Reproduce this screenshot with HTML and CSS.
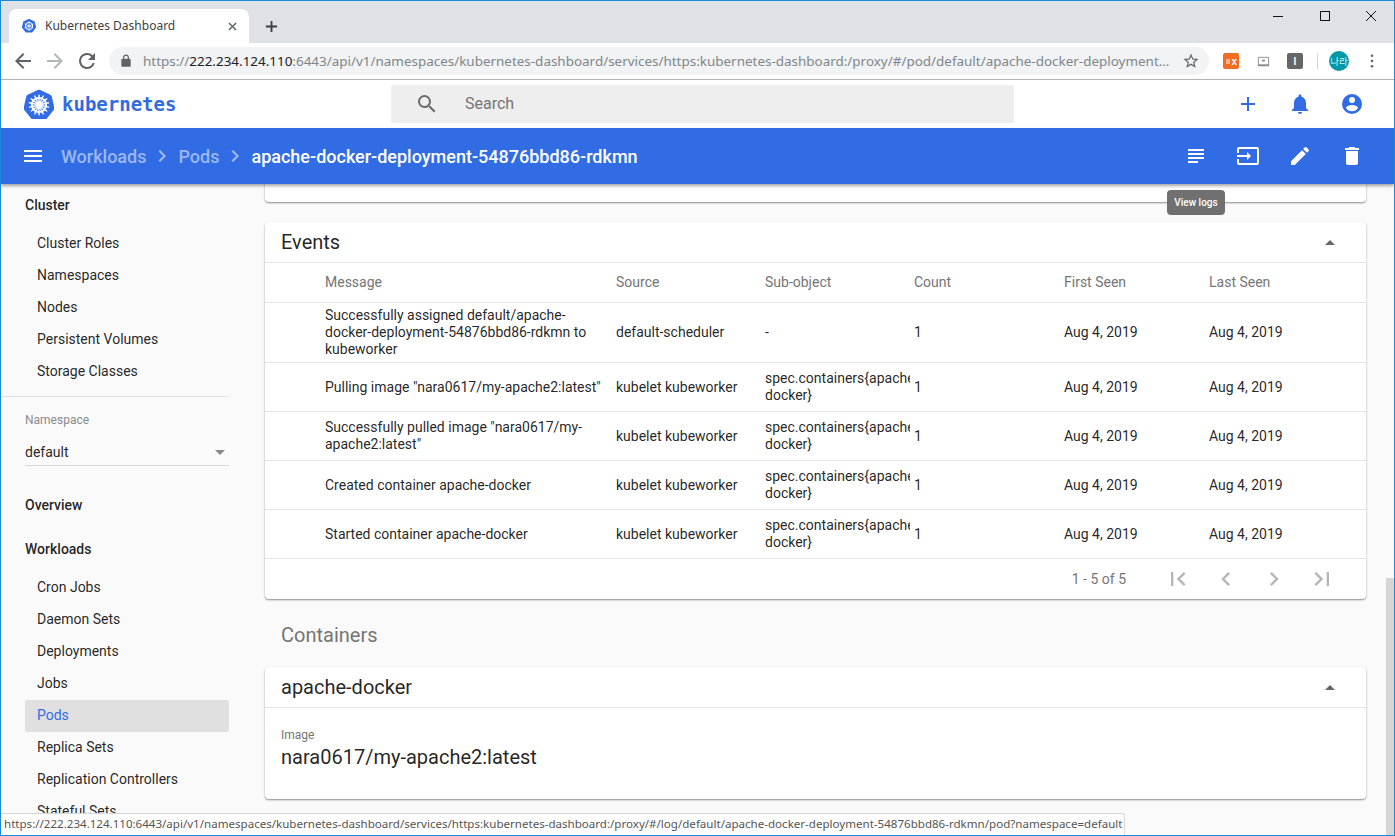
FILE: index.html
```html
<!DOCTYPE html>
<html lang="en">
<head>
<meta charset="utf-8">
<title>Kubernetes Dashboard</title>
<link rel="stylesheet" href="styles.css">
</head>
<body>
<div class="window">
  <div class="tabstrip">
    <div class="tab">
      <svg class="favicon" viewBox="0 0 24 24"><path fill="#326ce5" d="M12 1l8.6 4.100 2.100 9.300-5.900 7.500H7.200L1.300 14.400l2.100-9.300z"/><circle cx="12" cy="12" r="5.500" fill="none" stroke="#fff" stroke-width="1.400"/><path stroke="#fff" stroke-width="1.200" d="M12 5v14M5.500 9l13 6M18.500 9l-13 6"/></svg>
      <span class="tab-title">Kubernetes Dashboard</span>
      <svg class="tab-close" viewBox="0 0 10 10"><path stroke="#5f6368" stroke-width="1.600" d="M1 1l8 8M9 1l-8 8"/></svg>
    </div>
    <svg class="new-tab" viewBox="0 0 14 14"><path stroke="#3c4043" stroke-width="2" d="M7 1v12M1 7h12"/></svg>
    <div class="win-controls">
      <svg viewBox="0 0 12 12"><path stroke="#111" stroke-width="1" d="M1 6.500h10"/></svg>
      <svg viewBox="0 0 12 12"><rect x="1.500" y="1.500" width="9" height="9" fill="none" stroke="#111"/></svg>
      <svg class="win-close" viewBox="0 0 12 12"><path stroke="#111" stroke-width="1" d="M1 1l10 10M11 1L1 11"/></svg>
    </div>
  </div>

  <div class="browser-bar">
    <svg class="nav-icon" viewBox="0 0 24 24"><path fill="#5f6368" d="M20 11H7.800l5.600-5.600L12 4l-8 8 8 8 1.400-1.400L7.800 13H20z"/></svg>
    <svg class="nav-icon" viewBox="0 0 24 24"><path fill="#b4b6b9" d="M4 11h12.200l-5.600-5.600L12 4l8 8-8 8-1.400-1.400 5.600-5.600H4z"/></svg>
    <svg class="nav-icon" viewBox="0 0 24 24"><path fill="#5f6368" d="M17.650 6.350A7.960 7.960 0 0 0 12 4a8 8 0 1 0 7.730 10h-2.080A6 6 0 1 1 12 6c1.660 0 3.140.69 4.220 1.780L13 11h7V4z"/></svg>
    <div class="omnibox">
      <svg class="lock" viewBox="0 0 24 24"><path fill="#5f6368" d="M18 8h-1V6A5 5 0 0 0 7 6v2H6a2 2 0 0 0-2 2v10c0 1.100.9 2 2 2h12a2 2 0 0 0 2-2V10a2 2 0 0 0-2-2zM9 6a3 3 0 0 1 6 0v2H9z"/></svg>
      <span class="url"><span class="url-dim">https://</span><span class="url-host">222.234.124.110</span><span class="url-dim">:6443/api/v1/namespaces/kubernetes-dashboard/services/https:kubernetes-dashboard:/proxy/#/pod/default/apache-docker-deployment…</span></span>
      <svg class="star" viewBox="0 0 24 24"><path fill="#5f6368" d="M22 9.240l-7.190-.62L12 2 9.190 8.630 2 9.240l5.460 4.730L5.820 21 12 17.270 18.180 21l-1.630-7.030zM12 15.400l-3.760 2.270 1-4.280-3.320-2.880 4.380-.38L12 6.100l1.710 4.040 4.380.38-3.320 2.880 1 4.280z"/></svg>
    </div>
    <div class="extensions">
      <span class="ext ext-orange"><i></i>x</span>
      <svg class="ext-svg" viewBox="0 0 14 14"><path fill="#fff" stroke="#8a8d90" d="M1.500 2.500h11v9h-11z"/><path fill="#8a8d90" d="M1 10h12v2H1z"/><path fill="#8a8d90" d="M5.500 5h3v2h-3z"/></svg>
      <span class="ext ext-gray">I</span>
      <span class="ext-sep"></span>
      <span class="avatar">나라</span>
      <svg class="kebab" viewBox="0 0 4 16"><circle cx="2" cy="2" r="1.500" fill="#5f6368"/><circle cx="2" cy="8" r="1.500" fill="#5f6368"/><circle cx="2" cy="14" r="1.500" fill="#5f6368"/></svg>
    </div>
  </div>

  <header class="app-top">
    <div class="brand">
      <svg class="brand-logo" viewBox="0 0 32 32">
        <path fill="#326ce5" d="M16 .8c.5 0 1 .1 1.400.3l10.600 5.100c.9.400 1.500 1.200 1.700 2.100l2.600 11.400c.2 1 0 1.900-.6 2.700l-7.300 9.100c-.6.800-1.500 1.200-2.500 1.200H10.100c-1 0-1.900-.4-2.500-1.200L.3 22.400c-.6-.8-.8-1.700-.6-2.700L2.300 8.300c.2-.9.800-1.700 1.700-2.100L14.600 1.100c.4-.2.900-.3 1.400-.3z"/>
        <circle cx="16" cy="17" r="7.600" fill="none" stroke="#fff" stroke-width="2"/>
        <circle cx="16" cy="17" r="2" fill="#fff"/>
        <path stroke="#fff" stroke-width="1.500" stroke-linecap="round" d="M16 6.500v21M7.800 10.500l16.400 13M24.200 10.500l-16.400 13M5.800 19.300l20.400-4.600M26.200 19.300L5.800 14.700M11.500 26.500l9-19M20.500 26.500l-9-19"/>
      </svg>
      <span class="brand-name">kubernetes</span>
    </div>
    <div class="search">
      <svg class="search-icon" viewBox="0 0 24 24"><path fill="#6b6b6b" d="M15.500 14h-.790l-.280-.270A6.470 6.470 0 0 0 16 9.500 6.500 6.500 0 1 0 9.500 16c1.610 0 3.090-.59 4.230-1.570l.270.280v.790l5 4.990L20.490 19zm-6 0A4.500 4.500 0 1 1 14 9.500 4.490 4.490 0 0 1 9.500 14z"/></svg>
      <span class="search-text">Search</span>
    </div>
    <div class="top-actions">
      <svg class="icon24" viewBox="0 0 24 24"><path fill="#326ce5" d="M19 13h-6v6h-2v-6H5v-2h6V5h2v6h6z"/></svg>
      <svg class="icon24" viewBox="0 0 24 24"><path fill="#326ce5" d="M12 22c1.100 0 2-.9 2-2h-4c0 1.100.9 2 2 2zm6-6v-5c0-3.070-1.630-5.640-4.500-6.320V4c0-.83-.67-1.500-1.500-1.500s-1.500.67-1.500 1.500v.68C7.640 5.360 6 7.920 6 11v5l-2 2v1h16v-1z"/></svg>
      <svg class="icon24" viewBox="0 0 24 24"><path fill="#326ce5" d="M12 2a10 10 0 1 0 0 20 10 10 0 0 0 0-20zm0 3a3 3 0 1 1 0 6 3 3 0 0 1 0-6zm0 14.200a7.200 7.200 0 0 1-6-3.220c.03-1.990 4-3.080 6-3.080s5.970 1.090 6 3.080a7.200 7.200 0 0 1-6 3.220z"/></svg>
    </div>
  </header>

  <div class="app-bar">
    <svg class="icon24 menu-icon" viewBox="0 0 24 24"><path fill="#fff" d="M3 18h18v-2H3zm0-5h18v-2H3zm0-7v2h18V6z"/></svg>
    <nav class="crumbs">
      <span class="crumb-dim">Workloads</span>
      <svg class="crumb-sep" viewBox="0 0 24 24"><path fill="#a3bcf3" d="M8.590 16.590L13.170 12 8.590 7.410 10 6l6 6-6 6z"/></svg>
      <span class="crumb-dim">Pods</span>
      <svg class="crumb-sep" viewBox="0 0 24 24"><path fill="#a3bcf3" d="M8.590 16.590L13.170 12 8.590 7.410 10 6l6 6-6 6z"/></svg>
      <span class="crumb-now">apache-docker-deployment-54876bbd86-rdkmn</span>
    </nav>
    <div class="bar-actions">
      <svg class="icon24" viewBox="0 0 24 24"><path fill="#fff" d="M14 17H4v2h10zm6-8H4v2h16zM4 15h16v-2H4zM4 5v2h16V5z"/></svg>
      <svg class="icon24" viewBox="0 0 24 24"><path fill="#fff" d="M21 3.010H3c-1.100 0-2 .9-2 2V9h2V4.990h18v14.030H3V15H1v4.010c0 1.100.9 1.980 2 1.980h18c1.100 0 2-.88 2-1.980v-14a2 2 0 0 0-2-2zM11 16l4-4-4-4v3H1v2h10z"/></svg>
      <svg class="icon24" viewBox="0 0 24 24"><path fill="#fff" d="M3 17.250V21h3.750L17.810 9.940l-3.750-3.750zM20.710 7.040a1 1 0 0 0 0-1.410l-2.340-2.340a1 1 0 0 0-1.410 0l-1.830 1.830 3.750 3.750z"/></svg>
      <svg class="icon24" viewBox="0 0 24 24"><path fill="#fff" d="M6 19c0 1.100.9 2 2 2h8c1.100 0 2-.9 2-2V7H6zM19 4h-3.500l-1-1h-5l-1 1H5v2h14z"/></svg>
    </div>
  </div>

  <div class="app-main">
    <aside class="sidebar">
      <div class="nav-head">Cluster</div>
      <ul class="nav-list">
        <li>Cluster Roles</li>
        <li>Namespaces</li>
        <li>Nodes</li>
        <li>Persistent Volumes</li>
        <li>Storage Classes</li>
      </ul>
      <hr class="nav-rule">
      <div class="ns">
        <div class="ns-label">Namespace</div>
        <div class="ns-select"><span>default</span><i class="ns-caret"></i></div>
      </div>
      <div class="nav-head nav-head-overview">Overview</div>
      <div class="nav-head nav-head-work">Workloads</div>
      <ul class="nav-list">
        <li>Cron Jobs</li>
        <li>Daemon Sets</li>
        <li>Deployments</li>
        <li>Jobs</li>
        <li class="active">Pods</li>
        <li>Replica Sets</li>
        <li>Replication Controllers</li>
        <li>Stateful Sets</li>
      </ul>
    </aside>

    <main class="content">
      <section class="card card-stub"></section>

      <section class="card card-events">
        <div class="card-head"><span>Events</span><i class="caret-up"></i></div>
        <div class="row row-head">
          <div>Message</div><div>Source</div><div>Sub-object</div><div>Count</div><div>First Seen</div><div>Last Seen</div>
        </div>
        <div class="row row-tall">
          <div>Successfully assigned default/apache-docker-deployment-54876bbd86-rdkmn to kubeworker</div><div>default-scheduler</div><div>-</div><div>1</div><div>Aug 4, 2019</div><div>Aug 4, 2019</div>
        </div>
        <div class="row">
          <div>Pulling image "nara0617/my-apache2:latest"</div><div>kubelet kubeworker</div><div class="clip">spec.containers{apache-docker}</div><div>1</div><div>Aug 4, 2019</div><div>Aug 4, 2019</div>
        </div>
        <div class="row">
          <div>Successfully pulled image "nara0617/my-apache2:latest"</div><div>kubelet kubeworker</div><div class="clip">spec.containers{apache-docker}</div><div>1</div><div>Aug 4, 2019</div><div>Aug 4, 2019</div>
        </div>
        <div class="row">
          <div>Created container apache-docker</div><div>kubelet kubeworker</div><div class="clip">spec.containers{apache-docker}</div><div>1</div><div>Aug 4, 2019</div><div>Aug 4, 2019</div>
        </div>
        <div class="row">
          <div>Started container apache-docker</div><div>kubelet kubeworker</div><div class="clip">spec.containers{apache-docker}</div><div>1</div><div>Aug 4, 2019</div><div>Aug 4, 2019</div>
        </div>
        <div class="pager">
          <span class="pager-range">1 - 5 of 5</span>
          <svg class="pager-icon" viewBox="0 0 24 24"><path d="M18.410 16.590L13.820 12l4.590-4.590L17 6l-6 6 6 6zM6 6h2v12H6z"/></svg>
          <svg class="pager-icon" viewBox="0 0 24 24"><path d="M15.410 7.410L14 6l-6 6 6 6 1.410-1.410L10.830 12z"/></svg>
          <svg class="pager-icon" viewBox="0 0 24 24"><path d="M8.590 16.590L13.170 12 8.590 7.410 10 6l6 6-6 6z"/></svg>
          <svg class="pager-icon" viewBox="0 0 24 24"><path d="M5.590 7.410L10.180 12l-4.590 4.590L7 18l6-6-6-6zM16 6h2v12h-2z"/></svg>
        </div>
      </section>

      <h2 class="section-title">Containers</h2>

      <section class="card card-container">
        <div class="card-head"><span>apache-docker</span><i class="caret-up"></i></div>
        <div class="prop">
          <div class="prop-label">Image</div>
          <div class="prop-value">nara0617/my-apache2:latest</div>
        </div>
      </section>
    </main>

    <div class="scrollbar"><div class="scroll-thumb"></div></div>
  </div>

  <div class="tooltip">View logs</div>
  <div class="status-link">https://222.234.124.110:6443/api/v1/namespaces/kubernetes-dashboard/services/https:kubernetes-dashboard:/proxy/#/log/default/apache-docker-deployment-54876bbd86-rdkmn/pod?namespace=default</div>
</div>
</body>
</html>
```

FILE: styles.css
```css
* { box-sizing: border-box; }
html, body { margin: 0; padding: 0; height: 100%; overflow: hidden; }
body { font-family: Roboto, "Noto Sans", sans-serif; color: rgba(0,0,0,.87); }

.window {
  position: relative;
  width: 1395px;
  height: 836px;
  border: 1px solid #1a8ad8;
  display: flex;
  flex-direction: column;
  overflow: hidden;
  background: #fafafa;
}

/* browser chrome */
.tabstrip {
  height: 42px;
  flex: none;
  background: #dee1e6;
  display: flex;
  align-items: flex-end;
  padding-left: 8px;
}
.tab {
  width: 240px;
  height: 34px;
  background: #fff;
  border-radius: 8px 8px 0 0;
  display: flex;
  align-items: center;
  padding: 0 12px;
  gap: 8px;
}
.favicon { width: 16px; height: 16px; flex: none; }
.tab-title { font: 12px/16px "Noto Sans", sans-serif; color: #3c4043; flex: 1; }
.tab-close { width: 9px; height: 9px; }
.new-tab { width: 13px; height: 13px; margin: 0 auto 10px 16px; }
.win-controls {
  align-self: flex-start;
  display: flex;
  gap: 35px;
  padding: 9px 17px 0 0;
}
.win-controls svg { width: 12px; height: 12px; }
.win-controls .win-close { margin-left: -1px; }

.browser-bar {
  height: 37px;
  flex: none;
  background: #fff;
  border-bottom: 1px solid #b3b3b3;
  display: flex;
  align-items: center;
  padding: 0 0 0 10px;
}
.nav-icon { width: 24px; height: 24px; margin-right: 8px; flex: none; }
.omnibox {
  width: 1100px;
  height: 28px;
  margin-left: 2px;
  background: #f1f3f4;
  border-radius: 14px;
  display: flex;
  align-items: center;
  padding: 0 9px 0 10px;
}
.lock { width: 14px; height: 14px; flex: none; }
.url {
  flex: 1;
  min-width: 0;
  margin-left: 10px;
  font: 13.450px "Noto Sans", sans-serif;
  white-space: nowrap;
  color: #80868b;
}
.url-dim { color: #80868b; }
.url-host { color: #202124; }
.star { width: 18px; height: 18px; flex: none; }
.extensions { display: flex; align-items: center; margin-left: 14px; }
.ext {
  width: 16px; height: 16px;
  border-radius: 2px;
  display: flex; align-items: center; justify-content: center;
  color: #fff;
  font: bold 10px "Liberation Sans", sans-serif;
}
.ext-orange { background: #f26c22; justify-content: flex-end; padding-right: 2px; gap: 1px; }
.ext-orange i { width: 4px; height: 5px; background: #f9b48e; }
.ext-svg { width: 13px; height: 13px; margin: 0 17px 0 18px; }
.ext-gray { background: #666; }
.ext-sep { width: 1px; height: 16px; background: #d4d4d4; margin: 0 11px 0 14px; }
.avatar {
  width: 20px; height: 20px;
  border-radius: 50%;
  background: #0097a7;
  color: #d7f1f4;
  font: 9.500px "Noto Sans CJK KR", sans-serif;
  display: flex; align-items: center; justify-content: center;
}
.kebab { width: 4px; height: 14px; margin-left: 21px; }

/* app header */
.app-top {
  height: 48px;
  flex: none;
  background: #fff;
  display: flex;
  align-items: center;
  padding-left: 23px;
}
.brand { display: flex; align-items: center; width: 367px; }
.brand-logo { width: 30px; height: 30px; flex: none; }
.brand-name {
  margin-left: 8px;
  font: bold 19px "DejaVu Sans Mono", monospace;
  color: #326ce5;
}
.search {
  width: 623px;
  height: 38px;
  background: #eee;
  border-radius: 2px;
  display: flex;
  align-items: center;
  padding-left: 24px;
}
.search-icon { width: 24px; height: 24px; }
.search-text { margin: 0 0 2px 26px; font-size: 16px; color: #757575; }
.top-actions { display: flex; gap: 28px; margin-left: 222px; }
.icon24 { width: 24px; height: 24px; flex: none; }

.app-bar {
  position: relative;
  z-index: 2;
  height: 56px;
  flex: none;
  background: #326ce5;
  display: flex;
  align-items: center;
  padding-left: 20px;
  box-shadow: 0 2px 3px rgba(0,0,0,.35);
}
.crumbs { display: flex; align-items: center; margin-left: 16px; font-size: 18px; font-weight: 500; }
.crumb-dim { color: #9db8f2; }
.crumb-now { color: #fff; }
.crumb-sep { width: 24px; height: 24px; margin: 0 4px; }
.bar-actions { display: flex; gap: 28px; margin-left: auto; padding-right: 30px; }

/* main */
.app-main { flex: 1; min-height: 0; display: flex; overflow: hidden; }
.sidebar { width: 228px; flex: none; overflow: hidden; padding-top: 8px; }
.nav-head { padding-left: 24px; font-size: 14px; font-weight: 500; line-height: 26px; }
.nav-head-overview { margin-top: 26px; }
.nav-head-work { margin-top: 18px; }
.nav-list { list-style: none; margin: 9px 0 0 24px; padding: 0; }
.nav-list li { height: 32px; line-height: 32px; padding-left: 12px; font-size: 14px; }
.nav-list li.active {
  margin: 1px 0 -1px;
  line-height: 30px;
  background: #e0e0e0;
  color: #326ce5;
  border-radius: 2px;
}
.nav-rule { margin: 9px 0 0; border: 0; border-top: 1px solid #e2e2e2; }
.ns { padding: 16px 0 0 24px; }
.ns-label { font-size: 12px; line-height: 14px; color: #8a8a8a; }
.ns-select {
  display: flex; justify-content: space-between; align-items: center;
  margin-top: 12px;
  height: 27px;
  font-size: 14px;
  border-bottom: 1px solid #d9d9d9;
  padding-right: 4px;
}
.ns-caret { border: 5px solid transparent; border-top-color: #8a8a8a; border-bottom: 0; }

.content { flex: 1; min-width: 0; padding-left: 36px; }
.card {
  width: 1101px;
  background: #fff;
  border-radius: 4px;
  box-shadow: 0 1px 2px rgba(0,0,0,.45);
}
.card-stub { height: 39px; margin-top: -21px; }
.card-events { margin-top: 20px; }
.card-head {
  height: 41px;
  display: flex;
  align-items: center;
  justify-content: space-between;
  padding: 0 31px 0 16px;
  font-size: 20px;
  border-bottom: 1px solid #e4e4e4;
}
.caret-up { border: 5px solid transparent; border-bottom-color: #666; border-top: 0; }
.row {
  display: grid;
  grid-template-columns: 60px 291px 149px 149px 150px 145px 1fr;
  align-items: center;
  height: 49px;
  font-size: 14px;
  line-height: 17px;
  border-bottom: 1px solid #e4e4e4;
}
.row > div:first-child { grid-column: 2; padding-right: 14px; }
.row-head { height: 40px; color: #757575; }
.row-tall { height: 60px; }
.clip { overflow: hidden; margin-right: 4px; }
.pager {
  height: 40px;
  display: flex;
  align-items: center;
  justify-content: flex-end;
  gap: 20px;
  padding-right: 30px;
  font-size: 14px;
  color: #757575;
}
.pager-icon { width: 28px; height: 28px; flex: none; fill: #b5b5b5; }
.pager-range { margin-right: 18px; }
.section-title {
  margin: 24px 0 20px 16px;
  font-size: 20px;
  line-height: 24px;
  font-weight: 400;
  color: #757575;
}
.card-container { height: 132px; }
.prop { padding: 20px 16px; }
.prop-label { font-size: 12px; line-height: 14px; color: #757575; }
.prop-value { margin-top: 2px; font-size: 20px; line-height: 26px; }

.scrollbar { width: 8px; flex: none; display: flex; flex-direction: column; justify-content: flex-end; }
.scroll-thumb { height: 257px; background: #d6d6d6; }

/* overlays */
.tooltip {
  position: absolute;
  z-index: 3;
  left: 1166px;
  top: 189px;
  width: 58px;
  height: 25px;
  background: #707070;
  border-radius: 4px;
  color: #fff;
  font-size: 10px;
  font-weight: 500;
  line-height: 25px;
  text-align: center;
}
.status-link {
  position: absolute;
  z-index: 3;
  left: 0;
  bottom: 0;
  height: 22px;
  width: 1124px;
  padding: 2px 0 0 3px;
  background: #fff;
  border-top: 1px solid #d8d8d8;
  border-right: 1px solid #d8d8d8;
  border-top-right-radius: 3px;
  font: 11.570px "Noto Sans", sans-serif;
  color: #555;
  white-space: nowrap;
}
```
